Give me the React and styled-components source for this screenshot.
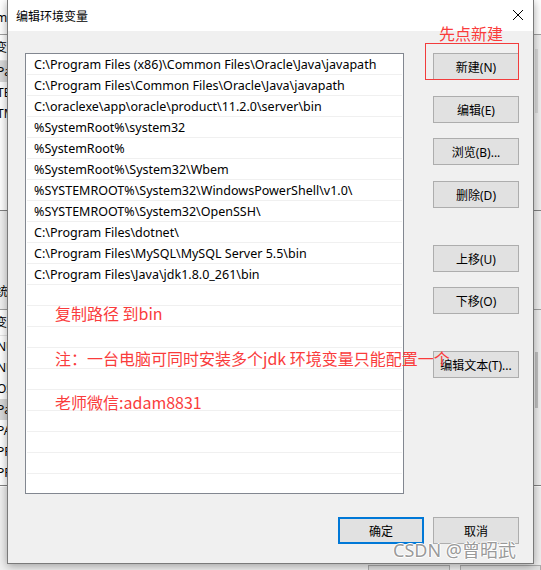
import React from "react";
import styled, { createGlobalStyle } from "styled-components";

const GlobalStyle = createGlobalStyle`
  html, body {
    margin: 0;
    padding: 0;
  }
  body {
    font-family: "Noto Sans", "Noto Sans CJK SC", sans-serif;
    background: #f0f0f0;
    overflow: hidden;
  }
`;

const paths = [
  "C:\\Program Files (x86)\\Common Files\\Oracle\\Java\\javapath",
  "C:\\Program Files\\Common Files\\Oracle\\Java\\javapath",
  "C:\\oraclexe\\app\\oracle\\product\\11.2.0\\server\\bin",
  "%SystemRoot%\\system32",
  "%SystemRoot%",
  "%SystemRoot%\\System32\\Wbem",
  "%SYSTEMROOT%\\System32\\WindowsPowerShell\\v1.0\\",
  "%SYSTEMROOT%\\System32\\OpenSSH\\",
  "C:\\Program Files\\dotnet\\",
  "C:\\Program Files\\MySQL\\MySQL Server 5.5\\bin",
  "C:\\Program Files\\Java\\jdk1.8.0_261\\bin",
];

const sideButtons = [
  { label: "新建(N)", gap: 0 },
  { label: "编辑(E)", gap: 16 },
  { label: "浏览(B)...", gap: 15 },
  { label: "删除(D)", gap: 16 },
  { label: "上移(U)", gap: 37 },
  { label: "下移(O)", gap: 15 },
  { label: "编辑文本(T)...", gap: 37 },
];

const userVars = ["Path", "TEMP", "TMP"];
const systemVars = [
  "NUMBER_OF_PROCESSORS",
  "NUMBER_OF_PROCESSORS",
  "OS",
  "Path",
  "PATHEXT",
  "PROCESSOR_ARCHITECTURE",
  "PROCESSOR_IDENTIFIER",
];

export default function App() {
  return (
    <Screen>
      <GlobalStyle />
      <Backdrop>
        <BackLabel $h={34}>m</BackLabel>
        <BackList $h={177}>
          <BackRows>
            <BackHeader>变量</BackHeader>
            {userVars.map((v) => (
              <BackRow key={v} $sel={v === "Path"}>
                {v}
              </BackRow>
            ))}
          </BackRows>
          <BackScroll>
            <Thumb $top={14} $h={64} $c="#dadada" />
          </BackScroll>
        </BackList>
        <BackLabel $h={98} $end>
          统变量(S)
        </BackLabel>
        <BackList $h={177}>
          <BackRows>
            <BackHeader>变量</BackHeader>
            {systemVars.map((v, i) => (
              <BackRow key={i} $sel={v === "Path"}>
                {v}
              </BackRow>
            ))}
          </BackRows>
          <BackScroll>
            <Thumb $top={42} $h={56} $c="#c2c2c2" />
          </BackScroll>
        </BackList>
        <BackFooter>
          <BackButton />
          <BackButton />
        </BackFooter>
      </Backdrop>

      <Dialog>
        <TitleBar>
          <Title>编辑环境变量</Title>
          <Close viewBox="0 0 10 10">
            <path d="M0 0L10 10M10 0L0 10" stroke="#000" strokeWidth="1" />
          </Close>
        </TitleBar>
        <Body>
          <Main>
            <PathList>
              {paths.map((p) => (
                <PathRow key={p}>{p}</PathRow>
              ))}
              {Array.from({ length: 11 }).map((_, i) => (
                <PathRow key={"e" + i} />
              ))}
            </PathList>
            <SideColumn>
              {sideButtons.map((b) => (
                <Button key={b.label} $gap={b.gap}>
                  {b.label}
                </Button>
              ))}
            </SideColumn>
          </Main>
          <Footer>
            <Button $primary>确定</Button>
            <Button>取消</Button>
          </Footer>
        </Body>
      </Dialog>

      <Highlight />
      <Note $x={439} $y={22}>先点新建</Note>
      <Note $x={55} $y={302}>复制路径 到bin</Note>
      <Note $x={55} $y={347}>注：一台电脑可同时安装多个jdk 环境变量只能配置一个</Note>
      <Note $x={55} $y={391}>老师微信:adam8831</Note>
      <Watermark>CSDN @曾昭武</Watermark>
    </Screen>
  );
}

const Screen = styled.div`
  position: relative;
  width: 541px;
  height: 570px;
  overflow: hidden;
  background: #f0f0f0;
`;

/* window behind the dialog */
const Backdrop = styled.div`
  display: flex;
  flex-direction: column;
  width: 541px;
  height: 570px;
  font-size: 12px;
  color: #000;
`;

const BackLabel = styled.div`
  height: ${(p) => p.$h}px;
  box-sizing: border-box;
  display: flex;
  align-items: ${(p) => (p.$end ? "flex-end" : "center")};
  padding-bottom: ${(p) => (p.$end ? "9px" : "0")};
  text-indent: -4px;
  background: ${(p) => (p.$end ? "#f0f0f0" : "#fff")};
`;

const BackList = styled.div`
  height: ${(p) => p.$h}px;
  box-sizing: border-box;
  display: flex;
  background: #fff;
  border-top: 1px solid #a0a0a0;
  border-bottom: 1px solid #828282;
`;

const BackRows = styled.div`
  flex: 1;
  display: flex;
  flex-direction: column;
`;

const BackHeader = styled.div`
  height: 25px;
  line-height: 25px;
  text-indent: -5px;
  border-bottom: 1px solid #e5e5e5;
`;

const BackRow = styled.div`
  height: 21px;
  line-height: 21px;
  text-indent: -3px;
  white-space: nowrap;
  background: ${(p) => (p.$sel ? "#d9d9d9" : "transparent")};
`;

const BackScroll = styled.div`
  position: relative;
  width: 7px;
  background: #f0f0f0;
  border-left: 1px solid #e3e3e3;
`;

const Thumb = styled.div`
  position: absolute;
  left: 1px;
  width: 3px;
  top: ${(p) => p.$top}px;
  height: ${(p) => p.$h}px;
  background: ${(p) => p.$c};
`;

const BackFooter = styled.div`
  flex: 1;
  display: flex;
  align-items: flex-end;
  gap: 10px;
  padding-left: 368px;
  border-top: 1px solid #fff;
`;

const BackButton = styled.div`
  width: 85px;
  height: 4px;
  background: #e1e1e1;
  border: 1px solid #adadad;
  border-bottom: none;
`;

/* the dialog */
const Dialog = styled.div`
  position: absolute;
  left: 7px;
  top: 0;
  width: 527px;
  height: 564px;
  box-sizing: border-box;
  display: flex;
  flex-direction: column;
  background: #f0f0f0;
  border: 1px solid #7a7a7a;
  border-top: none;
  box-shadow: 0 2px 9px rgba(0, 0, 0, 0.35);
  font-family: "Noto Sans", "Noto Sans CJK SC", sans-serif;
  font-size: 12px;
  color: #000;
`;

const TitleBar = styled.div`
  height: 31px;
  flex-shrink: 0;
  display: flex;
  align-items: center;
  justify-content: space-between;
  padding: 0 10px 0 8px;
  background: #fff;
`;

const Title = styled.span`
  font-size: 12px;
  font-family: "Noto Sans CJK SC", sans-serif;
`;

const Close = styled.svg`
  width: 10px;
  height: 10px;
  margin-top: -2px;
`;

const Body = styled.div`
  flex: 1;
  display: flex;
  flex-direction: column;
  padding: 22px 14px 0 17px;
`;

const Main = styled.div`
  display: flex;
  gap: 29px;
`;

const PathList = styled.div`
  width: 379px;
  height: 441px;
  box-sizing: border-box;
  overflow: hidden;
  background: #fff;
  border: 1px solid #828790;
  display: flex;
  flex-direction: column;
`;

const PathRow = styled.div`
  flex-shrink: 0;
  height: 20px;
  line-height: 21px;
  margin: 0 1px;
  padding-left: 7px;
  border-bottom: 1px solid #f0f0f0;
  white-space: nowrap;
  font-size: 12.5px;
`;

const SideColumn = styled.div`
  display: flex;
  flex-direction: column;
`;

const Button = styled.div`
  width: 86px;
  height: 27px;
  margin-top: ${(p) => p.$gap || 0}px;
  box-sizing: border-box;
  display: flex;
  align-items: center;
  justify-content: center;
  background: #e1e1e1;
  border: ${(p) => (p.$primary ? "2px solid #0078d7" : "1px solid #adadad")};
  font-size: 12px;
  white-space: nowrap;
`;

const Footer = styled.div`
  display: flex;
  justify-content: flex-end;
  gap: 9px;
  margin-top: 23px;
`;

/* annotations drawn on top of the screenshot */
const Highlight = styled.div`
  position: absolute;
  left: 425px;
  top: 43px;
  width: 94px;
  height: 37px;
  box-sizing: border-box;
  border: 1px solid #f23c3c;
`;

const Note = styled.div`
  position: absolute;
  left: ${(p) => p.$x}px;
  top: ${(p) => p.$y}px;
  font-family: "Noto Sans CJK SC", sans-serif;
  font-size: 16px;
  line-height: 22px;
  color: #fa3c3c;
  white-space: nowrap;
`;

const Watermark = styled.div`
  position: absolute;
  left: 393px;
  top: 537px;
  font-family: "Noto Sans", "Noto Sans CJK SC", sans-serif;
  font-size: 18px;
  line-height: 26px;
  color: #9a9a9a;
  white-space: nowrap;
  text-shadow: 1px 0 0 #fff, -1px 0 0 #fff, 0 1px 0 #fff, 0 -1px 0 #fff;
`;
